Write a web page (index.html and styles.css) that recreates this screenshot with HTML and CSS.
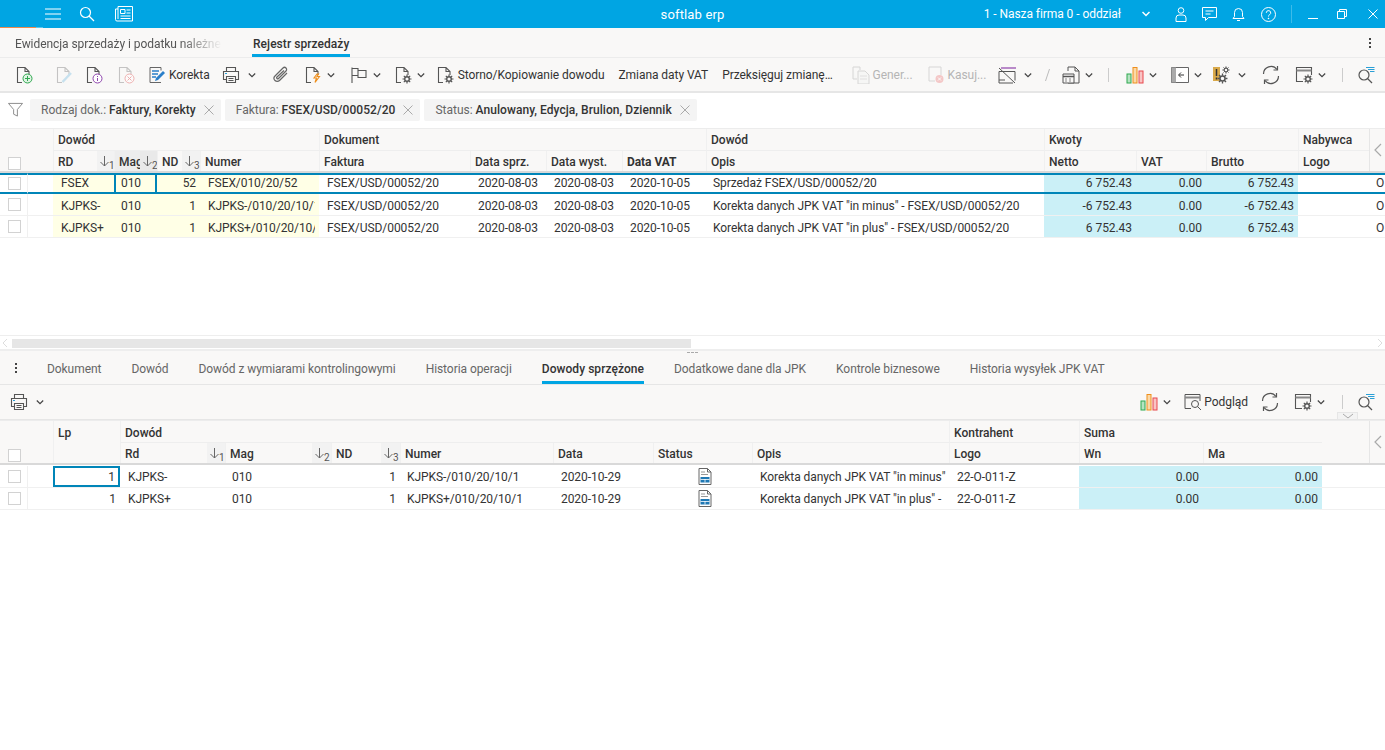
FILE: index.html
```html
<!DOCTYPE html>
<html lang="pl">
<head>
<meta charset="utf-8">
<title>softlab erp</title>
<link rel="stylesheet" href="styles.css">
</head>
<body>
<svg class="defs" aria-hidden="true">
  <symbol id="chev" viewBox="0 0 8 8"><path d="M.8 2.500l3.200 3.200 3.200-3.200" fill="none" stroke="#444" stroke-width="1.200"/></symbol>
  <symbol id="arr" viewBox="0 0 9 11"><path d="M4.500 0v10M.5 6l4 4 4-4" fill="none" stroke="#666"/></symbol>
  <symbol id="doc" viewBox="0 0 18 18"><path d="M7 16.500H2.500V1.500h7.500l4 4V9M10 1.500v4h4" fill="none" stroke="currentColor" stroke-width="1.100"/></symbol>
  <symbol id="print" viewBox="0 0 18 18"><path d="M4.500 5V1.500h9V5M4 13.500H1.500v-8h15v8H14M4.500 10.500h9v6h-9zM6.500 12.500h5M6.500 14.500h5" fill="none" stroke="#555" stroke-width="1.100"/><path d="M3 7.500h2" stroke="#2a9fd6" stroke-width="1.200"/></symbol>
  <symbol id="gear" viewBox="0 0 10 10"><circle cx="5" cy="5" r="2.300" fill="#f9f8f7" stroke="#555" stroke-width="1.400"/><path d="M5 .5v2M5 7.500v2M.5 5h2M7.500 5h2M1.800 1.800l1.400 1.400M6.800 6.800l1.400 1.400M8.200 1.800L6.800 3.200M3.200 6.800L1.800 8.200" stroke="#555" stroke-width="1.200"/></symbol>
  <symbol id="chart" viewBox="0 0 18 18"><rect x="1" y="8" width="4" height="9" fill="#b5e3c1" stroke="#2fa84f"/><rect x="7" y="1.500" width="4" height="15.500" fill="#fbd9a8" stroke="#ef8f1c"/><rect x="13" y="5" width="4" height="12" fill="#f9c4c4" stroke="#e8474c"/></symbol>
  <symbol id="refresh" viewBox="0 0 20 20"><path d="M2.500 9A7.500 7.500 0 0 1 16 4.500M17.500 11A7.500 7.500 0 0 1 4 15.500" fill="none" stroke="#555" stroke-width="1.200"/><path d="M16.500 1v4h-4M3.500 19v-4h4" fill="none" stroke="#555" stroke-width="1.200"/></symbol>
  <symbol id="wingear" viewBox="0 0 18 18"><path d="M8 15.500H1.500v-14h15V9" fill="none" stroke="#555" stroke-width="1.100"/><path d="M1.500 4.500h15" stroke="#888" stroke-width="2"/><use href="#gear" x="8" y="8" width="10" height="10"/></symbol>
  <symbol id="search" viewBox="0 0 18 18"><circle cx="7" cy="9" r="5" fill="none" stroke="#555" stroke-width="1.200"/><path d="M10.500 12.500l4.500 4.500" stroke="#555" stroke-width="1.300"/><path d="M9 1.500h8.500M11 3.500h6.500M13 5.500h4.500" stroke="#2a9fd6"/></symbol>
  <symbol id="statusdoc" viewBox="0 0 14 17"><path d="M1 .5h8.500l3.500 3.500v12.500H1z" fill="#fff" stroke="#666"/><path d="M9.500 .5V4H13" fill="none" stroke="#666"/><path d="M3 4h4M3 6.500h7" stroke="#999"/><path d="M2.500 9h9v5.500h-9z" fill="#1f78b4"/><path d="M2.500 11.500h9M7 11v3.500" stroke="#fff" stroke-width=".8"/></symbol>
</svg>

<header class="topbar">
  <div class="top-left">
    <svg class="i16" viewBox="0 0 16 16"><path d="M0 3h16M0 8h16M0 13h16" stroke="#fff" stroke-width="1.200"/></svg>
    <svg class="i16" viewBox="0 0 16 16"><circle cx="6.500" cy="6.500" r="5" fill="none" stroke="#fff" stroke-width="1.200"/><path d="M10 10l5 5" stroke="#fff" stroke-width="1.200"/></svg>
    <svg class="i18" viewBox="0 0 18 16"><path d="M3 .5h14.500v14.500H2A1.500 1.500 0 0 1 .5 13.500V3H3zM3 3v10" fill="none" stroke="#fff"/><path d="M5.500 3.500h4.500v4H5.500zM11.500 4h4M11.500 7h4M5.500 10h10M5.500 12.500h10" fill="none" stroke="#fff"/></svg>
  </div>
  <div class="brand">softlab erp</div>
  <div class="top-right">
    <span class="company">1 - Nasza firma 0 - oddział</span>
    <svg class="tchev" viewBox="0 0 8 8"><path d="M.5 2l3.500 3.500L7.500 2" fill="none" stroke="#fff" stroke-width="1.500"/></svg>
    <svg class="tu" viewBox="0 0 12 15"><circle cx="6" cy="3.500" r="2.800" fill="none" stroke="#fff"/><path d="M1 14.500V11a3 3 0 0 1 3-3h4a3 3 0 0 1 3 3v3.500z" fill="none" stroke="#fff"/></svg>
    <svg class="tc" viewBox="0 0 15 15"><path d="M.5.500h14v10H6.500l-3 3v-3h-3zM3.500 4h8M3.500 7h5" fill="none" stroke="#fff"/></svg>
    <svg class="tb-bell" viewBox="0 0 13 15"><path d="M1 11.500h11l-1.500-2V5.500a4 4 0 0 0-8 0v4zM5 13.500h3" fill="none" stroke="#fff"/></svg>
    <svg class="th" viewBox="0 0 15 15"><circle cx="7.500" cy="7.500" r="7" fill="none" stroke="#fff"/><path d="M5.300 5.800a2.200 2.200 0 1 1 3.300 1.900c-.8.500-1.100.9-1.100 1.800" fill="none" stroke="#fff"/><circle cx="7.500" cy="11.500" r=".8" fill="#fff"/></svg>
    <span class="tsep"></span>
    <svg class="tw" viewBox="0 0 10 10"><path d="M0 9.500h10" stroke="#fff"/></svg>
    <svg class="tw tw2" viewBox="0 0 10 10"><path d="M.5 2.500h7v7h-7zM2.500 2.500v-2h7v7h-2" fill="none" stroke="#fff"/></svg>
    <svg class="tw tw3" viewBox="0 0 10 10"><path d="M.5.500l9 9M9.500.500l-9 9" stroke="#fff"/></svg>
  </div>
  <div class="progress"></div>
</header>

<nav class="doctabs">
  <span class="doctab-fade">Ewidencja sprzedaży i podatku należne</span>
  <span class="doctab-on">Rejestr sprzedaży</span>
  <span class="kebab"><i></i><i></i><i></i></span>
</nav>

<div class="toolbar main-tb">
  <svg class="ic dk" viewBox="0 0 18 18"><use href="#doc"/><circle cx="12.500" cy="12.500" r="4.500" fill="#dff3e3" stroke="#2fa84f"/><path d="M12.500 10v5M10 12.500h5" stroke="#2fa84f"/></svg>
  <svg class="ic ml22 dim" viewBox="0 0 18 18"><use href="#doc"/><path d="M7.500 16l8.500-9" stroke="#9fcfe8" stroke-width="2.500"/></svg>
  <svg class="ic ml12 dk" viewBox="0 0 18 18"><use href="#doc"/><circle cx="12.500" cy="12.500" r="4.500" fill="#fff" stroke="#8e44ad"/><path d="M12.500 12v3M12.500 10v1" stroke="#8e44ad"/></svg>
  <svg class="ic ml14 dim" viewBox="0 0 18 18"><use href="#doc"/><circle cx="12.500" cy="12.500" r="4.500" fill="#fff" stroke="#e57373"/><path d="M10.500 10.500l4 4M14.500 10.500l-4 4" stroke="#e57373"/></svg>
  <svg class="ic ml13" viewBox="0 0 18 18"><path d="M2 1.500h11v3M2 1.500v15h11" fill="none" stroke="#666"/><path d="M4 5h7M4 8h6M4 11h4" stroke="#2a7fc9" stroke-width="1.300"/><path d="M7 15l1-3 7-7 2 2-7 7z" fill="#2a7fc9"/></svg>
  <span class="tx ml3">Korekta</span>
  <svg class="ic ml12"><use href="#print"/></svg>
  <svg class="ch ml8"><use href="#chev"/></svg>
  <svg class="ic ml16" viewBox="0 0 18 18"><path d="M15 7l-7.500 7.500a3 3 0 0 1-4.500-4.500l8-8a2 2 0 0 1 3 3l-7.500 7.500a1 1 0 0 1-1.500-1.500L12 4.500" fill="none" stroke="#666" stroke-width="1.200"/></svg>
  <svg class="ic ml14 dk" viewBox="0 0 18 18"><use href="#doc"/><path d="M13 8l-3 4h2.500l-1.500 4.500 4.500-6H13l1.500-2.500z" fill="none" stroke="#ef8f1c" stroke-width="1.100"/></svg>
  <svg class="ch ml5"><use href="#chev"/></svg>
  <svg class="ic ml15" viewBox="0 0 18 18"><path d="M2 17V1.500M2 2.500h6v2h8v7H8v-2H2M8 2.500v7" fill="none" stroke="#555" stroke-width="1.100"/></svg>
  <svg class="ch ml5"><use href="#chev"/></svg>
  <svg class="ic ml13 dk" viewBox="0 0 18 18"><use href="#doc"/><use href="#gear" x="8" y="8" width="10" height="10"/></svg>
  <svg class="ch ml5"><use href="#chev"/></svg>
  <svg class="ic ml11 dk" viewBox="0 0 18 18"><use href="#doc"/><use href="#gear" x="8" y="8" width="10" height="10"/></svg>
  <span class="tx ml4">Storno/Kopiowanie dowodu</span>
  <span class="tx ml14">Zmiana daty VAT</span>
  <span class="tx ml14">Przeksięguj zmianę…</span>
  <svg class="ic ml19 dim" viewBox="0 0 18 18"><path d="M1 1h7v3M1 1v12h4M6 5h7l4 4v9H6z" fill="#f5f5f5" stroke="#bbb"/><path d="M8 10h7M8 13h7" stroke="#ccc"/></svg>
  <span class="tx ml3 off">Gener...</span>
  <svg class="ic ml14 dim" viewBox="0 0 18 18"><path d="M8 15H2V1h12v8" fill="none" stroke="#bbb"/><circle cx="12.500" cy="13" r="4" fill="#f0a0a0"/><path d="M11 11.500l3 3M14 11.500l-3 3" stroke="#fff"/></svg>
  <span class="tx ml3 off">Kasuj...</span>
  <svg class="ic ml12" viewBox="0 0 18 18"><path d="M3 1h15v2H3z" fill="#b98ac9"/><path d="M1 5.500h16v9M1 5.500V17h14M1 14h6M1 2l16 15" fill="none" stroke="#555"/></svg>
  <svg class="ch ml8"><use href="#chev"/></svg>
  <svg class="slash ml13" viewBox="0 0 5 12"><path d="M4.500 0L.5 12" stroke="#bbb"/></svg>
  <svg class="ic ml12" viewBox="0 0 18 18"><path d="M6 5V1h7l4 4v12H6M13 1v4h4" fill="none" stroke="#555"/><path d="M1 8h11v9H1z" fill="#f9f8f7" stroke="#555"/><path d="M1 10.500h11" stroke="#555" stroke-width="1.500"/><path d="M3 13h2M7 13h2M3 15h2M7 15h2" stroke="#888"/></svg>
  <svg class="ch ml5"><use href="#chev"/></svg>
  <span class="vsep ml15"></span>
  <svg class="ic ml17"><use href="#chart"/></svg>
  <svg class="ch ml5"><use href="#chev"/></svg>
  <svg class="ic ml14" viewBox="0 0 18 18"><path d="M.5 1.500h17v15H.5z" fill="#fff" stroke="#666"/><path d="M.5 1.500H5v15H.5z" fill="#aaa"/><path d="M13 9H8M10 6.500L7.500 9l2.500 2.500" fill="none" stroke="#333"/></svg>
  <svg class="ch ml5"><use href="#chev"/></svg>
  <svg class="ic ml11" viewBox="0 0 18 18"><path d="M0 1h7v14H0z" fill="#d9a94a"/><path d="M3.500 3v7M3.500 11.500v2" stroke="#333" stroke-width="1.500"/><use href="#gear" x="9" y="0" width="8" height="8"/><use href="#gear" x="4" y="7" width="11" height="11"/></svg>
  <svg class="ch ml7"><use href="#chev"/></svg>
  <svg class="ic-r ml15"><use href="#refresh"/></svg>
  <svg class="ic ml14"><use href="#wingear"/></svg>
  <svg class="ch ml5"><use href="#chev"/></svg>
  <span class="vsep ml16"></span>
  <svg class="ic ml14"><use href="#search"/></svg>
</div>

<div class="filters">
  <svg class="funnel" viewBox="0 0 16 16"><path d="M.5 1.500h15L10 8v7l-4-2V8z" fill="none" stroke="#888"/></svg>
  <span class="chip">Rodzaj dok.:&nbsp;<b>Faktury, Korekty</b><svg class="x" viewBox="0 0 10 10"><path d="M.5.500l9 9M9.500.500l-9 9" stroke="#aaa"/></svg></span>
  <span class="chip">Faktura:&nbsp;<b>FSEX/USD/00052/20</b><svg class="x" viewBox="0 0 10 10"><path d="M.5.500l9 9M9.500.500l-9 9" stroke="#aaa"/></svg></span>
  <span class="chip">Status:&nbsp;<b>Anulowany, Edycja, Brulion, Dziennik</b><svg class="x" viewBox="0 0 10 10"><path d="M.5.500l9 9M9.500.500l-9 9" stroke="#aaa"/></svg></span>
</div>

<section class="tbl top-tbl">
  <div class="tgrid thead">
    <div class="h-check"><span class="cb"></span></div>
    <div class="h-empty"></div>
    <div class="gh s7">Dowód</div>
    <div class="gh s4">Dokument</div>
    <div class="gh">Dowód</div>
    <div class="gh s3">Kwoty</div>
    <div class="gh">Nabywca</div>
    <div class="h-arrow"><svg viewBox="0 0 8 14"><path d="M7 1L1 7l6 6" fill="none" stroke="#aaa" stroke-width="1.200"/></svg></div>
    <div class="sh">RD</div>
    <div class="sort"><svg><use href="#arr"/></svg><sub>1</sub></div>
    <div class="sh sh-on">Mag</div>
    <div class="sort sort-on"><svg><use href="#arr"/></svg><sub>2</sub></div>
    <div class="sh">ND</div>
    <div class="sort"><svg><use href="#arr"/></svg><sub>3</sub></div>
    <div class="sh">Numer</div>
    <div class="sh">Faktura</div>
    <div class="sh">Data sprz.</div>
    <div class="sh">Data wyst.</div>
    <div class="sh sh-b">Data VAT</div>
    <div class="sh">Opis</div>
    <div class="sh">Netto</div>
    <div class="sh">VAT</div>
    <div class="sh">Brutto</div>
    <div class="sh">Logo</div>
  </div>
  <div class="tgrid row sel">
    <div class="c"><span class="cb"></span></div><div class="c bl"></div>
    <div class="c y s2 p8">FSEX</div><div class="c y s2 focus">010</div><div class="c y s2 r">52</div>
    <div class="c y clip p8">FSEX/010/20/52</div><div class="c p8">FSEX/USD/00052/20</div><div class="c p8">2020-08-03</div><div class="c p8">2020-08-03</div><div class="c p8">2020-10-05</div>
    <div class="c">Sprzedaż FSEX/USD/00052/20</div><div class="c k r">6 752.43</div><div class="c k r">0.00</div><div class="c k r">6 752.43</div><div class="c"></div><div class="c">O</div>
  </div>
  <div class="tgrid row">
    <div class="c"><span class="cb"></span></div><div class="c bl"></div>
    <div class="c y s2 p8">KJPKS-</div><div class="c y s2">010</div><div class="c y s2 r">1</div>
    <div class="c y clip p8">KJPKS-/010/20/10/1</div><div class="c p8">FSEX/USD/00052/20</div><div class="c p8">2020-08-03</div><div class="c p8">2020-08-03</div><div class="c p8">2020-10-05</div>
    <div class="c">Korekta danych JPK VAT "in minus" - FSEX/USD/00052/20</div><div class="c k r">-6 752.43</div><div class="c k r">0.00</div><div class="c k r">-6 752.43</div><div class="c"></div><div class="c">O</div>
  </div>
  <div class="tgrid row">
    <div class="c"><span class="cb"></span></div><div class="c bl"></div>
    <div class="c y s2 p8">KJPKS+</div><div class="c y s2">010</div><div class="c y s2 r">1</div>
    <div class="c y clip p8">KJPKS+/010/20/10/1</div><div class="c p8">FSEX/USD/00052/20</div><div class="c p8">2020-08-03</div><div class="c p8">2020-08-03</div><div class="c p8">2020-10-05</div>
    <div class="c">Korekta danych JPK VAT "in plus" - FSEX/USD/00052/20</div><div class="c k r">6 752.43</div><div class="c k r">0.00</div><div class="c k r">6 752.43</div><div class="c"></div><div class="c">O</div>
  </div>
</section>

<div class="hscroll">
  <svg class="sa" viewBox="0 0 6 10"><path d="M5 1L1 5l4 4" fill="none" stroke="#ddd"/></svg>
  <div class="track"><div class="thumb"></div></div>
  <svg class="sa" viewBox="0 0 6 10"><path d="M1 1l4 4-4 4" fill="none" stroke="#ddd"/></svg>
</div>

<section class="lower">
  <span class="grip"></span>
  <nav class="subtabs">
    <span class="kebab kb2"><i></i><i></i><i></i></span>
    <span>Dokument</span><span>Dowód</span><span>Dowód z wymiarami kontrolingowymi</span><span>Historia operacji</span><span class="on">Dowody sprzężone</span><span>Dodatkowe dane dla JPK</span><span>Kontrole biznesowe</span><span>Historia wysyłek JPK VAT</span>
  </nav>
  <div class="toolbar sub-tb">
    <svg class="ic"><use href="#print"/></svg>
    <svg class="ch ml8"><use href="#chev"/></svg>
    <svg class="ic auto"><use href="#chart"/></svg>
    <svg class="ch ml5"><use href="#chev"/></svg>
    <svg class="ic ml13" viewBox="0 0 18 18"><path d="M7 15.500H1v-14h15V8" fill="none" stroke="#555"/><path d="M1 4.500h15" stroke="#888" stroke-width="2"/><circle cx="11" cy="11" r="3.500" fill="none" stroke="#555"/><path d="M13.500 13.500l3.500 3.500" stroke="#555"/></svg>
    <span class="tx ml2">Podgląd</span>
    <svg class="ic-r ml12"><use href="#refresh"/></svg>
    <svg class="ic ml14"><use href="#wingear"/></svg>
    <svg class="ch ml5"><use href="#chev"/></svg>
    <span class="vsep ml17"></span>
    <svg class="ic ml14"><use href="#search"/></svg>
    <span class="collapse"><svg viewBox="0 0 12 6"><path d="M1 1l5 4 5-4" fill="none" stroke="#aaa"/></svg></span>
  </div>
  <div class="bgrid thead">
    <div class="h-check"><span class="cb"></span></div>
    <div class="h-empty"></div>
    <div class="lp">Lp</div>
    <div class="gh s10">Dowód</div><div class="gh">Kontrahent</div><div class="gh s2">Suma</div><div class="gh-none"></div>
    <div class="h-arrow"><svg viewBox="0 0 8 14"><path d="M7 1L1 7l6 6" fill="none" stroke="#aaa" stroke-width="1.200"/></svg></div>
    <div class="sh">Rd</div><div class="sort"><svg><use href="#arr"/></svg><sub>1</sub></div><div class="sh">Mag</div><div class="sort"><svg><use href="#arr"/></svg><sub>2</sub></div><div class="sh">ND</div><div class="sort"><svg><use href="#arr"/></svg><sub>3</sub></div>
    <div class="sh">Numer</div><div class="sh">Data</div><div class="sh">Status</div><div class="sh">Opis</div><div class="sh">Logo</div><div class="sh">Wn</div><div class="sh">Ma</div><div class="gh-none"></div>
  </div>
  <div class="bgrid row">
    <div class="c"><span class="cb"></span></div><div class="c bl"></div>
    <div class="c r focus-all">1</div><div class="c s2 p8">KJPKS-</div><div class="c s2">010</div><div class="c s2 r">1</div>
    <div class="c">KJPKS-/010/20/10/1</div><div class="c p8">2020-10-29</div><div class="c mid"><svg class="st"><use href="#statusdoc"/></svg></div>
    <div class="c p8">Korekta danych JPK VAT "in minus"</div><div class="c p8">22-O-011-Z</div><div class="c k r">0.00</div><div class="c k r">0.00</div><div class="c"></div>
  </div>
  <div class="bgrid row">
    <div class="c"><span class="cb"></span></div><div class="c bl"></div>
    <div class="c r">1</div><div class="c s2 p8">KJPKS+</div><div class="c s2">010</div><div class="c s2 r">1</div>
    <div class="c">KJPKS+/010/20/10/1</div><div class="c p8">2020-10-29</div><div class="c mid"><svg class="st"><use href="#statusdoc"/></svg></div>
    <div class="c p8">Korekta danych JPK VAT "in plus" -</div><div class="c p8">22-O-011-Z</div><div class="c k r">0.00</div><div class="c k r">0.00</div><div class="c"></div>
  </div>
</section>
</body>
</html>
```
FILE: styles.css
```css
* { box-sizing: border-box; }
html, body { margin: 0; height: 100%; overflow: hidden; }
body { font: 12px/16px Roboto, "Liberation Sans", sans-serif; letter-spacing: -.06px; color: #333; background: #fff; }
.defs { position: absolute; width: 0; height: 0; }
svg { display: block; flex: none; }

.topbar { position: relative; height: 28px; background: #00a5e3; color: #fff; display: grid; grid-template-columns: 1fr auto 1fr; align-items: center; }
.top-left { display: flex; align-items: center; padding-left: 45px; gap: 18px; }
.i16 { width: 16px; height: 16px; }
.i18 { width: 18px; height: 16px; margin-left: 2px; }
.brand { font-size: 13px; letter-spacing: .15px; padding-top: 2px; }
.top-right { display: flex; align-items: center; justify-content: flex-end; }
.company { margin-right: 21px; white-space: nowrap; }
.tchev { width: 8px; height: 8px; }
.tu { width: 12px; height: 15px; margin-left: 25px; }
.tc { width: 15px; height: 15px; margin-left: 15px; }
.tb-bell { width: 13px; height: 15px; margin-left: 15px; }
.th { width: 15px; height: 15px; margin-left: 16px; }
.tsep { width: 1px; height: 18px; background: #3dbbe9; margin-left: 15px; }
.tw { width: 10px; height: 10px; margin-left: 16px; }
.tw2 { margin-left: 19px; }
.tw3 { margin: 0 7px 0 21px; }
.progress { position: absolute; left: 0; bottom: 0; width: 43px; height: 1px; background: linear-gradient(90deg, #f08a4b 0 36px, #5cc7ee 36px); }

.doctabs { height: 30px; background: #f9f8f7; border-bottom: 1px solid #ececec; display: flex; align-items: center; padding-left: 15px; position: relative; }
.doctab-fade { width: 207px; overflow: hidden; white-space: nowrap; color: #555; -webkit-mask-image: linear-gradient(90deg, #000 80%, transparent); mask-image: linear-gradient(90deg, #000 80%, transparent); padding-top: 2px; }
.doctab-on { margin-left: 30px; font-weight: 500; letter-spacing: .05px; color: #333; height: 29px; padding: 8px 1px 0; border-bottom: 3px solid #00a5e3; }
.kebab { display: flex; flex-direction: column; gap: 2px; margin-left: auto; margin-right: 14px; }
.kebab i { width: 2px; height: 2px; background: #444; display: block; }

.toolbar { display: flex; align-items: center; background: #f9f8f7; }
.main-tb { height: 35px; padding-left: 15px; border-bottom: 2px solid #e6e6e6; white-space: nowrap; }
.sub-tb { height: 35px; padding: 0 10px; border-bottom: 1px solid #e6e6e6; position: relative; }
.ic { width: 18px; height: 18px; color: #aaa; }
.dk { color: #555; }
.ic-r { width: 20px; height: 20px; }
.dim { opacity: .55; color: #999; }
.ch { width: 8px; height: 8px; }
.tx { color: #333; }
.off { color: #b5b5b5; }
.slash { width: 5px; height: 12px; }
.vsep { width: 1px; height: 14px; background: #ccc; }
.auto { margin-left: auto; }
.ml2 { margin-left: 2px; } .ml3 { margin-left: 3px; } .ml4 { margin-left: 4px; } .ml5 { margin-left: 5px; } .ml7 { margin-left: 7px; } .ml8 { margin-left: 8px; }
.ml11 { margin-left: 11px; } .ml12 { margin-left: 12px; } .ml13 { margin-left: 13px; } .ml14 { margin-left: 14px; } .ml15 { margin-left: 15px; } .ml16 { margin-left: 16px; } .ml17 { margin-left: 17px; } .ml19 { margin-left: 19px; } .ml22 { margin-left: 22px; }

.filters { height: 35px; display: flex; align-items: flex-start; padding: 6px 0 0 8px; gap: 4px; background: #fff; }
.funnel { width: 15px; height: 15px; margin: 3px 3px 0 0; }
.chip { height: 22px; background: #f4f4f4; border-radius: 2px; padding: 0 7px 0 11px; display: flex; align-items: center; color: #666; white-space: nowrap; letter-spacing: 0; }
.chip b { font-weight: 500; color: #333; letter-spacing: .05px; }
.x { width: 10px; height: 10px; margin-left: 8px; }

.tgrid { display: grid; grid-template-columns: 27px 26px 44px 17px 26px 17px 25px 18px 119px 151px 76px 76px 84px 338px 92px 70px 92px 71px 16px; }
.bgrid { display: grid; grid-template-columns: 27px 26px 67px 87px 18px 87px 19px 50px 19px 153px 100px 99px 197px 130px 124px 119px 47px 16px; }
.thead { background: #f9f8f7; grid-template-rows: 22px 20px; height: 45px; border-top: 1px solid #ececec; border-bottom: 2px solid #d9d9d9; }
.bgrid.thead { margin-bottom: 1px; }
.h-check { grid-row: 1 / 3; grid-column: 1; display: flex; align-items: flex-end; padding: 0 0 1px 8px; }
.h-empty { grid-row: 1 / 3; grid-column: 2; }
.gh { font-weight: 500; letter-spacing: 0; padding: 3px 0 0 4px; border-left: 1px solid #f0f0f0; border-bottom: 1px solid #eee; white-space: nowrap; overflow: hidden; }
.bgrid .gh, .lp { padding-top: 4px; }
.h-arrow { grid-row: 1 / 3; grid-column: -2; border-left: 1px solid #e6e6e6; display: flex; align-items: center; padding-left: 4px; }
.h-arrow svg { width: 8px; height: 14px; }
.sh { font-weight: 500; letter-spacing: 0; padding: 3px 0 0 4px; border-left: 1px solid #f0f0f0; white-space: nowrap; overflow: hidden; }
.sh-on { background: #ededed; }
.sh-b { font-weight: 700; letter-spacing: -.06px; }
.sort { background: #f2f2f2; color: #555; padding: 5px 0 0 3px; display: flex; overflow: hidden; }
.sort svg { width: 9px; height: 11px; }
.sort sub { font-size: 10px; line-height: 10px; margin-top: 5px; vertical-align: baseline; }
.sort-on { background: #e9e9e9; }
.s2 { grid-column: span 2; } .s3 { grid-column: span 3; } .s4 { grid-column: span 4; } .s7 { grid-column: span 7; } .s10 { grid-column: span 10; }
.lp { grid-row: 1 / 3; font-weight: 500; padding-left: 4px; border-left: 1px solid #f0f0f0; }

.row { height: 22px; background: #fff; border-bottom: 1px solid #f0f0f0; white-space: nowrap; }
.c { padding: 3px 4px 0 7px; overflow: hidden; height: 21px; min-width: 0; color: #333; }
.tgrid.row .c { padding-top: 4px; }
.c:first-child, .tgrid.row .c:first-child { padding: 4px 0 0 8px; }
.tgrid.row .p8 { padding-left: 8px; }
.p8 { padding-left: 8px; }
.bl { border-left: 1px solid #f0f0f0; }
.y { background: #ffffe6; }
.k { background: #cbf0f7; }
.r { text-align: right; }
.clip { border-right: 4px solid #ffffe6; padding-right: 0; }
.cb { display: block; width: 13px; height: 13px; background: #fff; border: 1px solid #d2d2d2; }
.sel { border-bottom: 0; height: 21px; }
.tgrid.sel .c { height: 21px; border-top: 2px solid #0085b8; border-bottom: 2px solid #0085b8; padding-top: 0; }
.tgrid.sel .c:first-child { padding-top: 2px; }
.sel .clip { border-right: 0; }
.focus { border-left: 2px solid #0085b8; border-right: 2px solid #0085b8; padding-left: 5px; }
.focus-all { border: 2px solid #0085b8; padding: 1px 3px 0 0; }
.mid { display: flex; justify-content: center; padding: 2px 0 0 4px; }
.st { width: 14px; height: 17px; }

.top-tbl { height: 208px; background: #fff; border-bottom: 1px solid #eee; }
.hscroll { height: 15px; display: flex; align-items: center; background: #fff; padding: 1px 2px 0; gap: 4px; border-bottom: 2px solid #eee; }
.sa { width: 6px; height: 10px; }
.track { flex: 1; height: 9px; }
.thumb { width: 679px; height: 9px; background: #e6e6e6; }

.lower { position: relative; }
.grip { position: absolute; left: 687px; top: 1px; width: 11px; height: 1px; border-top: 1px dashed #aaa; z-index: 1; }
.subtabs { height: 34px; background: #f9f8f7; border-bottom: 1px solid #e6e6e6; display: flex; align-items: center; gap: 30px; padding: 2px 0 0 47px; color: #666; position: relative; white-space: nowrap; }
.subtabs .on { font-weight: 500; letter-spacing: .05px; color: #333; height: 31px; padding-top: 8px; border-bottom: 3px solid #00a5e3; align-self: flex-end; }
.kb2 { position: absolute; left: 15px; top: 12px; margin: 0; }
.collapse { position: absolute; right: 27px; bottom: 0; width: 21px; height: 7px; background: #f3f3f3; border: 1px solid #e6e6e6; border-bottom: 0; display: flex; justify-content: center; }
.collapse svg { width: 12px; height: 6px; }
```
